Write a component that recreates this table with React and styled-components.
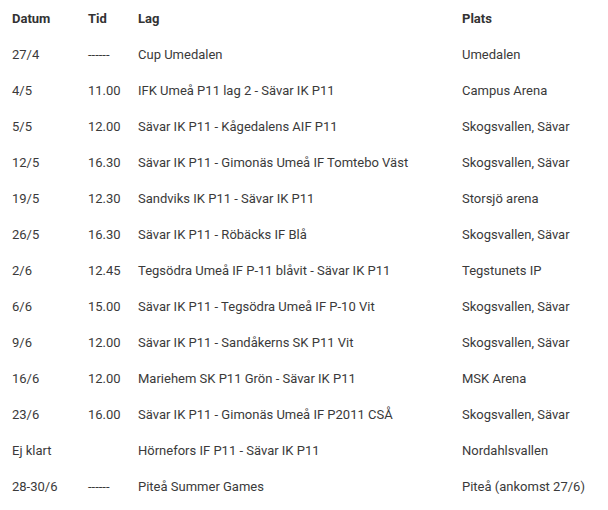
import React from 'react';
import styled, { createGlobalStyle } from 'styled-components';

const GlobalStyle = createGlobalStyle`
  body {
    margin: 0;
    background: #fff;
    font-family: Roboto, "Liberation Sans", Arial, sans-serif;
    color: #333;
  }
`;

const games = [
  ['27/4', '------', 'Cup Umedalen', 'Umedalen'],
  ['4/5', '11.00', 'IFK Umeå P11 lag 2 - Sävar IK P11', 'Campus Arena'],
  ['5/5', '12.00', 'Sävar IK P11 - Kågedalens AIF P11', 'Skogsvallen, Sävar'],
  ['12/5', '16.30', 'Sävar IK P11 - Gimonäs Umeå IF Tomtebo Väst', 'Skogsvallen, Sävar'],
  ['19/5', '12.30', 'Sandviks IK P11 - Sävar IK P11', 'Storsjö arena'],
  ['26/5', '16.30', 'Sävar IK P11 - Röbäcks IF Blå', 'Skogsvallen, Sävar'],
  ['2/6', '12.45', 'Tegsödra Umeå IF P-11 blåvit - Sävar IK P11', 'Tegstunets IP'],
  ['6/6', '15.00', 'Sävar IK P11 - Tegsödra Umeå IF P-10 Vit', 'Skogsvallen, Sävar'],
  ['9/6', '12.00', 'Sävar IK P11 - Sandåkerns SK P11 Vit', 'Skogsvallen, Sävar'],
  ['16/6', '12.00', 'Mariehem SK P11 Grön - Sävar IK P11', 'MSK Arena'],
  ['23/6', '16.00', 'Sävar IK P11 - Gimonäs Umeå IF P2011 CSÅ', 'Skogsvallen, Sävar'],
  ['Ej klart', '', 'Hörnefors IF P11 - Sävar IK P11', 'Nordahlsvallen'],
  ['28-30/6', '------', 'Piteå Summer Games', 'Piteå (ankomst 27/6)'],
];

const Schedule = styled.div`
  padding-left: 12px;
`;

const Row = styled.div`
  display: grid;
  grid-template-columns: 76px 50px 324px 1fr;
  align-items: center;
  height: 36px;
  font-size: 13px;
  font-weight: ${(p) => (p.$head ? 700 : 400)};
  color: ${(p) => (p.$head ? '#333' : '#3a3a3a')};
`;

const Cell = styled.div`
  white-space: nowrap;
`;

export default function App() {
  return (
    <>
      <GlobalStyle />
      <Schedule>
        <Row $head>
          <Cell>Datum</Cell>
          <Cell>Tid</Cell>
          <Cell>Lag</Cell>
          <Cell>Plats</Cell>
        </Row>
        {games.map((g, i) => (
          <Row key={i}>
            {g.map((c, j) => (
              <Cell key={j}>{c}</Cell>
            ))}
          </Row>
        ))}
      </Schedule>
    </>
  );
}
